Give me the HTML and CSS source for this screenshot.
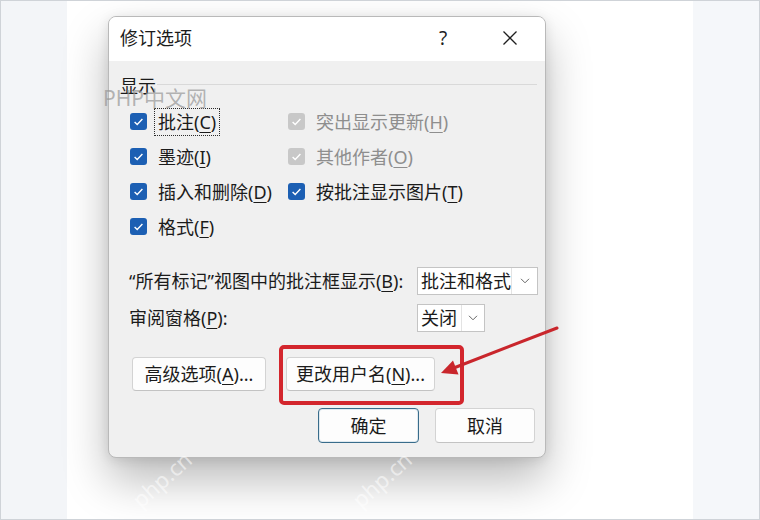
FILE: index.html
```html
<!DOCTYPE html>
<html lang="zh-CN">
<head>
<meta charset="utf-8">
<title>修订选项</title>
<link rel="stylesheet" href="styles.css">
</head>
<body>
<div class="screen">
  <div class="strip strip-left"></div>
  <div class="page"></div>
  <div class="strip strip-right"></div>

  <div class="dialog">
    <div class="titlebar">
      <span class="title">修订选项</span>
      <div class="controls">
        <span class="ctl">?</span>
        <span class="ctl">
          <svg width="16" height="16" viewBox="0 0 16 16"><path d="M1.5 1.5 L14.5 14.5 M14.5 1.5 L1.5 14.5" stroke="#1f1f1f" stroke-width="1.3" fill="none"/></svg>
        </span>
      </div>
    </div>
    <div class="body">
      <div class="group"><span class="group-label">显示</span><span class="rule"></span></div>

      <div class="checks">
        <div class="check">
          <svg class="box" width="17" height="17" viewBox="0 0 17 17"><rect width="17" height="17" rx="3" fill="#1c5fb3"/><path d="M4.6 8.9 L7.2 11.4 L12.4 6.1" stroke="#fff" stroke-width="1.4" fill="none"/></svg>
          <span class="lbl focus">批注(<u>C</u>)</span>
        </div>
        <div class="check disabled">
          <svg class="box" width="17" height="17" viewBox="0 0 17 17"><rect width="17" height="17" rx="3" fill="#c8c8c8"/><path d="M4.6 8.9 L7.2 11.4 L12.4 6.1" stroke="#fff" stroke-width="1.4" fill="none"/></svg>
          <span class="lbl">突出显示更新(<u>H</u>)</span>
        </div>
        <div class="check">
          <svg class="box" width="17" height="17" viewBox="0 0 17 17"><rect width="17" height="17" rx="3" fill="#1c5fb3"/><path d="M4.6 8.9 L7.2 11.4 L12.4 6.1" stroke="#fff" stroke-width="1.4" fill="none"/></svg>
          <span class="lbl">墨迹(<u>I</u>)</span>
        </div>
        <div class="check disabled">
          <svg class="box" width="17" height="17" viewBox="0 0 17 17"><rect width="17" height="17" rx="3" fill="#c8c8c8"/><path d="M4.6 8.9 L7.2 11.4 L12.4 6.1" stroke="#fff" stroke-width="1.4" fill="none"/></svg>
          <span class="lbl">其他作者(<u>O</u>)</span>
        </div>
        <div class="check">
          <svg class="box" width="17" height="17" viewBox="0 0 17 17"><rect width="17" height="17" rx="3" fill="#1c5fb3"/><path d="M4.6 8.9 L7.2 11.4 L12.4 6.1" stroke="#fff" stroke-width="1.4" fill="none"/></svg>
          <span class="lbl">插入和删除(<u>D</u>)</span>
        </div>
        <div class="check">
          <svg class="box" width="17" height="17" viewBox="0 0 17 17"><rect width="17" height="17" rx="3" fill="#1c5fb3"/><path d="M4.6 8.9 L7.2 11.4 L12.4 6.1" stroke="#fff" stroke-width="1.4" fill="none"/></svg>
          <span class="lbl">按批注显示图片(<u>T</u>)</span>
        </div>
        <div class="check">
          <svg class="box" width="17" height="17" viewBox="0 0 17 17"><rect width="17" height="17" rx="3" fill="#1c5fb3"/><path d="M4.6 8.9 L7.2 11.4 L12.4 6.1" stroke="#fff" stroke-width="1.4" fill="none"/></svg>
          <span class="lbl">格式(<u>F</u>)</span>
        </div>
        <div></div>
      </div>

      <div class="field field-first">
        <span class="flabel">“所有标记”视图中的批注框显示(<u>B</u>):</span>
        <div class="select select-wide">
          <span class="val">批注和格式</span>
          <span class="chev"><svg width="10" height="6" viewBox="0 0 10 6"><path d="M1 0.8 L5 4.8 L9 0.8" stroke="#666" stroke-width="1" fill="none"/></svg></span>
        </div>
      </div>
      <div class="field">
        <span class="flabel">审阅窗格(<u>P</u>):</span>
        <div class="select select-narrow">
          <span class="val">关闭</span>
          <span class="chev"><svg width="10" height="6" viewBox="0 0 10 6"><path d="M1 0.8 L5 4.8 L9 0.8" stroke="#666" stroke-width="1" fill="none"/></svg></span>
        </div>
      </div>

      <div class="btnrow">
        <button class="btn btn-adv">高级选项(<u>A</u>)...</button>
        <button class="btn btn-user">更改用户名(<u>N</u>)...</button>
      </div>

      <div class="okrow">
        <button class="btn btn-ok">确定</button>
        <button class="btn btn-cancel">取消</button>
      </div>
    </div>
  </div>

  <div class="wm wm-1">PHP中文网</div>
  <div class="wm-diag d1">php.cn</div>
  <div class="wm-diag d2">php.cn</div>

  <div class="redbox"></div>
  <svg class="arrow" width="760" height="520" viewBox="0 0 760 520">
    <line x1="557" y1="328" x2="455" y2="367.5" stroke="#c9262c" stroke-width="3" stroke-linecap="round"/>
    <polygon points="441,373 453,360.5 458.5,374.5" fill="#c9262c"/>
  </svg>
</div>
</body>
</html>
```

FILE: styles.css
```css
* { box-sizing: border-box; }

html, body {
  margin: 0;
  padding: 0;
  background: #ffffff;
}

body {
  font-family: "Noto Sans", "Noto Sans CJK SC", sans-serif;
  color: #1b1b1b;
}

.screen {
  position: relative;
  width: 760px;
  height: 520px;
  border: 1px solid #cfd3d8;
  display: flex;
  overflow: hidden;
  background: #ffffff;
}

.strip {
  width: 66px;
  flex: none;
}
.strip-left { background: #f3f5f8; }
.strip-right { background: #f5f7fa; }
.page {
  flex: 1;
  background: #ffffff;
}

/* dialog window on the desktop */
.dialog {
  position: absolute;
  left: 107px;
  top: 15px;
  width: 438px;
  height: 442px;
  background: #f0f0f0;
  border: 1px solid #b9b9b9;
  border-radius: 8px;
  box-shadow: 0 22px 45px rgba(0, 0, 0, 0.27), 0 2px 12px rgba(0, 0, 0, 0.10);
  overflow: hidden;
  font-size: 18px;
  line-height: 24px;
}

.titlebar {
  height: 44px;
  background: #ffffff;
  display: flex;
  align-items: center;
  justify-content: space-between;
  padding-left: 11px;
  padding-bottom: 2px;
}
.title {
  font-size: 18px;
  color: #1b1b1b;
}
.controls {
  display: flex;
  gap: 21px;
  padding-right: 12px;
}
.ctl {
  width: 46px;
  height: 32px;
  display: flex;
  align-items: center;
  justify-content: center;
  font-size: 19px;
  color: #1f1f1f;
}

.body {
  display: flex;
  flex-direction: column;
}

.group {
  margin: 13px 8px 0 11px;
  height: 24px;
  display: flex;
  align-items: center;
}
.group-label { margin-right: 1px; }
.rule {
  flex: 1;
  height: 1px;
  background: #d9d9d9;
  margin-top: -3px;
}

.checks {
  margin-top: 6px;
  padding-left: 21px;
  display: grid;
  grid-template-columns: 158px auto;
  grid-auto-rows: 35px;
}
.check {
  display: flex;
  align-items: center;
}
.check .box {
  flex: none;
  margin-right: 11px;
}
.lbl {
  white-space: nowrap;
}
.lbl u {
  text-decoration-thickness: 1px;
  text-underline-offset: 3px;
}
.lbl.focus {
  border: 1px dotted #2a2a2a;
  padding: 1px 3px;
  margin-left: -4px;
}
.check.disabled .lbl {
  color: #8e8e8e;
}

.field {
  display: flex;
  align-items: center;
  padding-left: 20px;
  height: 28px;
  margin-top: 9px;
}
.field-first { margin-top: 23px; }
.flabel {
  width: 288px;
  white-space: nowrap;
}
.flabel u, .btn u {
  text-decoration-thickness: 1px;
  text-underline-offset: 3px;
}
.select {
  height: 28px;
  display: flex;
  background: #ffffff;
  border: 1px solid #c4c4c4;
}
.select-wide { width: 121px; }
.select-narrow { width: 68px; }
.val {
  flex: 1;
  padding-left: 3px;
  line-height: 26px;
  white-space: nowrap;
  overflow: hidden;
}
.chev {
  width: 26px;
  flex: none;
  display: flex;
  align-items: center;
  justify-content: center;
  border-left: 1px solid #e3e3e3;
}
.select-narrow .chev { width: 23px; }

.btn {
  font-family: inherit;
  font-size: 18px;
  line-height: 24px;
  color: #1b1b1b;
  background: #fdfdfd;
  border: 1px solid #d3d3d3;
  border-bottom-color: #c3c3c3;
  border-radius: 4px;
  padding: 0;
  white-space: nowrap;
}

.btnrow {
  display: flex;
  gap: 20px;
  margin-top: 25px;
  padding-left: 23px;
}
.btn-adv { width: 134px; height: 34px; }
.btn-user { width: 149px; height: 34px; }

.okrow {
  display: flex;
  justify-content: flex-end;
  gap: 16px;
  margin-top: 17px;
  padding-right: 10px;
}
.btn-ok {
  width: 101px;
  height: 35px;
  border: 1px solid #386c8b;
  box-shadow: inset 0 0 0 1px #dfe9ef;
}
.btn-cancel {
  width: 100px;
  height: 35px;
}

/* watermarks */
.wm {
  position: absolute;
  color: rgba(150, 150, 150, 0.7);
  font-size: 21px;
  line-height: 24px;
  white-space: nowrap;
  pointer-events: none;
}
.wm-1 { left: 102px; top: 85px; }

.wm-diag {
  position: absolute;
  font-size: 22px;
  line-height: 26px;
  color: rgba(255, 255, 255, 0.55);
  transform: rotate(-42deg);
  white-space: nowrap;
  pointer-events: none;
}
.d1 { left: 125px; top: 465px; }
.d2 { left: 345px; top: 465px; }

.redbox {
  position: absolute;
  left: 278px;
  top: 344px;
  width: 185px;
  height: 60px;
  border: 4px solid #d3262d;
  border-radius: 5px;
  pointer-events: none;
}

.arrow {
  position: absolute;
  left: -1px;
  top: -1px;
  pointer-events: none;
}
```
